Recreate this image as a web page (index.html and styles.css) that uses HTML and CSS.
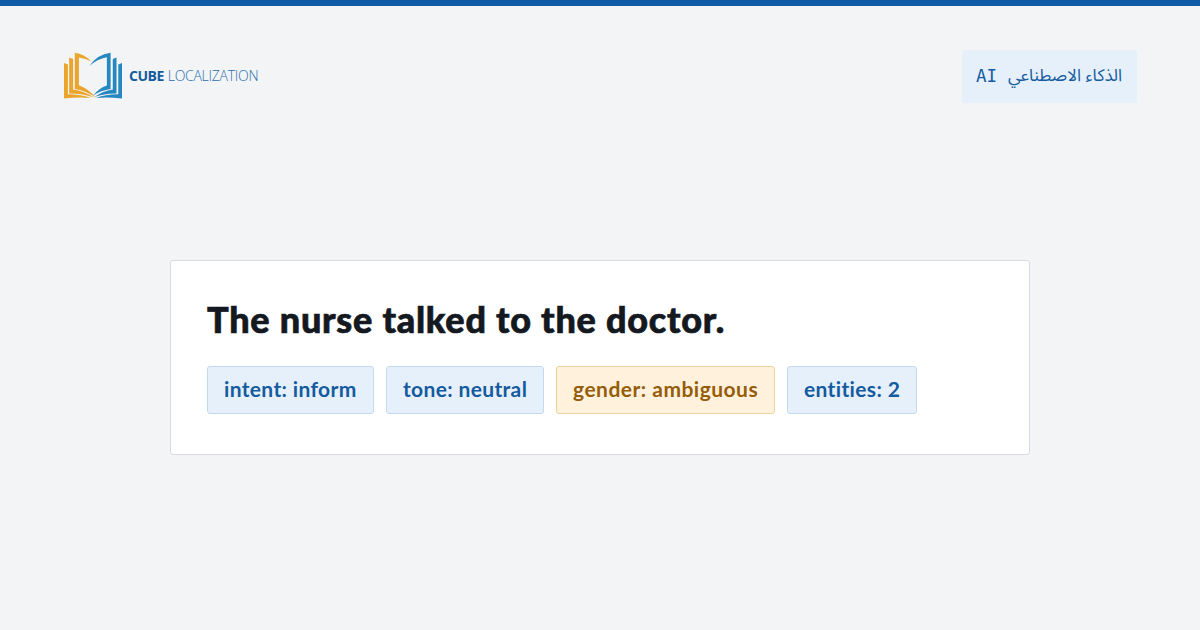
FILE: index.html
```html
<!DOCTYPE html>
<html lang="en">
<head>
<meta charset="utf-8">
<title>Cube Localization</title>
<link rel="stylesheet" href="styles.css">
</head>
<body>
<div class="page">
  <header class="header">
    <div class="brand">
      <svg class="brand-mark" viewBox="64 52 58 47" aria-hidden="true">
        <g fill="#eba52d">
          <path d="M64 63L67.9 64.5V94.3Q80 94.1 91 97.9Q78 96.8 64 98.5Z"/>
          <path d="M69.2 57.6L73.1 59V89.6Q84 91.2 94 97.6Q83 93.6 69.2 93.5Z"/>
          <path d="M74.8 52.8Q84 54 91.5 61.5Q86 58.4 78.9 57.5V85.3Q89 89.3 96 97.8Q87 91.2 74.8 89Z"/>
        </g>
        <g fill="#2787c1">
          <path d="M110.6 52.8V88.9Q101 90.3 93.5 95.2Q99 88.2 106.9 85.5V57.2Q97 58.9 89.5 66Q97 54.5 110.6 52.8Z"/>
          <path d="M116.5 57.6V93.5Q104 93.4 94.5 97Q103 90.8 112.8 89.5V59Z"/>
          <path d="M122 63V98.5Q108 97 96 98Q106 94.2 118.3 94.3V64.5Z"/>
        </g>
      </svg>
      <div class="brand-name"><b>CUBE</b><span>LOCALIZATION</span></div>
    </div>
    <div class="badge" dir="rtl"><span class="badge-ar" lang="ar">الذكاء الاصطناعي</span><span class="badge-en">AI</span></div>
  </header>
  <main class="main">
    <section class="card">
      <h1 class="title">The nurse talked to the doctor.</h1>
      <div class="tags">
        <span class="tag tag-intent">intent: inform</span>
        <span class="tag tag-tone">tone: neutral</span>
        <span class="tag tag-gender">gender: ambiguous</span>
        <span class="tag tag-entities">entities: 2</span>
      </div>
    </section>
  </main>
</div>
</body>
</html>
```
FILE: styles.css
```css
* { box-sizing: border-box; }
body { margin: 0; }
.page {
  height: 630px;
  display: flex;
  flex-direction: column;
  border-top: 6px solid #0f5ba7;
  background: #f2f4f6;
  font-family: Lato, "Noto Sans", sans-serif;
}
.header {
  display: flex;
  justify-content: space-between;
  align-items: flex-start;
  padding: 44px 63px 0 64px;
}
.brand { display: flex; align-items: center; gap: 7px; padding-top: 2px; }
.brand-mark { width: 58px; height: 47px; display: block; }
.brand-name {
  display: flex;
  gap: 4px;
  font: 300 14px/20px "Open Sans", sans-serif;
  color: #2a6fae;
}
.brand-name b { color: #135c9f; font-weight: 700; letter-spacing: -0.5px; }
.brand-name span { letter-spacing: -0.28px; }
.badge {
  display: flex;
  align-items: center;
  justify-content: space-between;
  width: 175px;
  height: 53px;
  padding: 0 15px 2px 14px;
  background: #e6f0fb;
  border-radius: 2px;
  color: #155c9f;
}
.badge-ar { font: 17px/24px "Noto Sans Arabic", "DejaVu Sans", sans-serif; }
.badge-en { font: 17.5px/24px "DejaVu Sans Mono", monospace; }
.main { display: flex; justify-content: center; padding-top: 157px; }
.card {
  width: 860px;
  height: 195px;
  padding: 34px 36px;
  background: #fff;
  border: 1px solid #d8dce1;
  border-radius: 3px;
}
.title {
  margin: 0 0 23px;
  font-size: 36px;
  line-height: 48px;
  font-weight: 900;
  letter-spacing: 0.76px;
  -webkit-text-stroke: 0.7px currentColor;
  color: #14181f;
  white-space: nowrap;
}
.tags { display: flex; gap: 12px; }
.tag {
  height: 48px;
  display: flex;
  align-items: center;
  padding: 0 0 3px 16px;
  border: 1px solid #c5d9ec;
  border-radius: 3px;
  background: #e6f0fb;
  color: #145b9f;
  font-size: 21px;
  font-weight: 700;
  letter-spacing: 0.35px;
  font-variant-ligatures: none;
  white-space: nowrap;
}
.tag-intent { width: 167px; }
.tag-tone { width: 158px; }
.tag-gender { width: 219px; background: #fff1dc; border-color: #ecd49d; color: #965d09; letter-spacing: 0.48px; }
.tag-entities { width: 130px; }
```
